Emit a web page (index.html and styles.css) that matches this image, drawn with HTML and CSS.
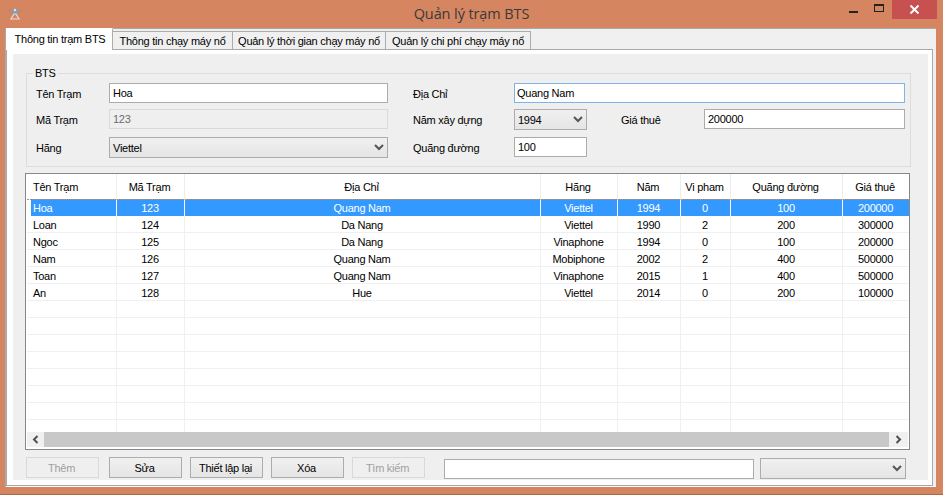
FILE: index.html
```html
<!DOCTYPE html>
<html lang="vi">
<head>
<meta charset="utf-8">
<title>Quản lý trạm BTS</title>
<link rel="stylesheet" href="styles.css">
</head>
<body>
<div class="window">
  <header class="titlebar">
    <svg class="app-icon" width="16" height="16" viewBox="0 0 16 16"><path d="M3 4q-1 3 1 5M13 4q1 3-1 5" stroke="#a98a7c" fill="none"/><circle cx="8" cy="6.5" r="3" fill="#7f9cbc"/><circle cx="8" cy="5" r="1.2" fill="#e8e4e0"/><path d="M7 9 4 14h8L9 9z" fill="none" stroke="#eadbd2" stroke-width="1.2"/></svg>
    <h1 class="title">Quản lý trạm BTS</h1>
    <div class="controls">
      <span class="ctl"><span class="min"></span></span>
      <span class="ctl"><span class="max"></span></span>
      <span class="close"><svg width="11" height="9" viewBox="0 0 11 9"><path d="M1.5 .5l8 8M9.5 .5l-8 8" stroke="#fff" stroke-width="2" fill="none"/></svg></span>
    </div>
  </header>
  <div class="client">
    <nav class="tabs">
      <span class="tab active">Thông tin trạm BTS</span>
      <span class="tab t2">Thông tin chạy máy nổ</span>
      <span class="tab t3">Quản lý thời gian chạy máy nổ</span>
      <span class="tab t4">Quản lý chi phí chạy máy nổ</span>
    </nav>
    <div class="panel">
      <div class="inner">
        <section class="group">
          <span class="legend">BTS</span>
          <div class="form">
            <label class="lbl">Tên Trạm</label>
            <div class="field wide">Hoa</div>
            <label class="lbl l2">Địa Chỉ</label>
            <div class="field focus span3">Quang Nam</div>

            <label class="lbl">Mã Trạm</label>
            <div class="field wide disabled">123</div>
            <label class="lbl l2">Năm xây dựng</label>
            <div class="combo tall">1994<svg class="chev" width="10" height="7" viewBox="0 0 10 7"><path d="M1 1l4 4 4-4" stroke="#555" stroke-width="2" fill="none"/></svg></div>
            <label class="lbl l3">Giá thuê</label>
            <div class="field">200000</div>

            <label class="lbl">Hãng</label>
            <div class="combo tall">Viettel<svg class="chev" width="10" height="7" viewBox="0 0 10 7"><path d="M1 1l4 4 4-4" stroke="#555" stroke-width="2" fill="none"/></svg></div>
            <label class="lbl l2">Quãng đường</label>
            <div class="field">100</div>
          </div>
        </section>

        <section class="list">
          <div class="viewport">
            <table class="grid">
              <colgroup><col class="c1"><col class="c2"><col class="c3"><col class="c4"><col class="c5"><col class="c6"><col class="c7"><col class="c8"></colgroup>
              <thead><tr><th class="left">Tên Trạm</th><th>Mã Trạm</th><th>Địa Chỉ</th><th>Hãng</th><th>Năm</th><th>Vi pham</th><th>Quãng đường</th><th>Giá thuê</th></tr></thead>
              <tbody>
                <tr class="sel"><td class="left">Hoa</td><td>123</td><td>Quang Nam</td><td>Viettel</td><td>1994</td><td>0</td><td>100</td><td>200000</td></tr>
                <tr><td class="left">Loan</td><td>124</td><td>Da Nang</td><td>Viettel</td><td>1990</td><td>2</td><td>200</td><td>300000</td></tr>
                <tr><td class="left">Ngoc</td><td>125</td><td>Da Nang</td><td>Vinaphone</td><td>1994</td><td>0</td><td>100</td><td>200000</td></tr>
                <tr><td class="left">Nam</td><td>126</td><td>Quang Nam</td><td>Mobiphone</td><td>2002</td><td>2</td><td>400</td><td>500000</td></tr>
                <tr><td class="left">Toan</td><td>127</td><td>Quang Nam</td><td>Vinaphone</td><td>2015</td><td>1</td><td>400</td><td>500000</td></tr>
                <tr><td class="left">An</td><td>128</td><td>Hue</td><td>Viettel</td><td>2014</td><td>0</td><td>200</td><td>100000</td></tr>
                <tr><td></td><td></td><td></td><td></td><td></td><td></td><td></td><td></td></tr>
                <tr><td></td><td></td><td></td><td></td><td></td><td></td><td></td><td></td></tr>
                <tr><td></td><td></td><td></td><td></td><td></td><td></td><td></td><td></td></tr>
                <tr><td></td><td></td><td></td><td></td><td></td><td></td><td></td><td></td></tr>
                <tr><td></td><td></td><td></td><td></td><td></td><td></td><td></td><td></td></tr>
                <tr><td></td><td></td><td></td><td></td><td></td><td></td><td></td><td></td></tr>
                <tr><td></td><td></td><td></td><td></td><td></td><td></td><td></td><td></td></tr>
                <tr><td></td><td></td><td></td><td></td><td></td><td></td><td></td><td></td></tr>
              </tbody>
            </table>
          </div>
          <div class="hscroll">
            <span class="arrow"><svg width="7" height="9" viewBox="0 0 7 9"><path d="M5.5 1 2 4.5 5.5 8" stroke="#505050" stroke-width="2" fill="none"/></svg></span>
            <span class="track"></span>
            <span class="arrow"><svg width="7" height="9" viewBox="0 0 7 9"><path d="M1.5 1 5 4.5 1.5 8" stroke="#505050" stroke-width="2" fill="none"/></svg></span>
          </div>
        </section>

        <footer class="actions">
          <button class="btn" disabled>Thêm</button>
          <button class="btn b2">Sửa</button>
          <button class="btn">Thiết lập lại</button>
          <button class="btn">Xóa</button>
          <button class="btn" disabled>Tìm kiếm</button>
          <div class="field search"></div>
          <div class="combo filter"><svg class="chev" width="10" height="7" viewBox="0 0 10 7"><path d="M1 1l4 4 4-4" stroke="#555" stroke-width="2" fill="none"/></svg></div>
        </footer>
      </div>
    </div>
  </div>
</div>
</body>
</html>
```
FILE: styles.css
```css
* { box-sizing: border-box; }
html, body { margin: 0; height: 100%; }
body {
  font-family: "Liberation Sans", Arial, sans-serif;
  font-size: 11px;
  letter-spacing: -0.25px;
  color: #000;
  overflow: hidden;
}
.window {
  width: 943px;
  height: 495px;
  background: #d58661;
  border-bottom: 1px solid #a8694b;
  position: relative;
}
.titlebar {
  height: 28px;
  display: flex;
  align-items: flex-start;
  justify-content: center;
  position: relative;
}
.app-icon { position: absolute; left: 7px; top: 5px; }
.title {
  margin: 4px 0 0;
  font: 400 14.5px/20px "Open Sans", "Noto Sans", sans-serif;
  color: #3a3a3a;
  letter-spacing: -0.1px;
}
.controls {
  position: absolute;
  right: 6px;
  top: 0;
  display: flex;
}
.ctl { width: 26px; height: 19px; display: flex; align-items: center; justify-content: center; }
.min { width: 9px; height: 2px; margin-top: 5px; background: #222; }
.max { width: 10px; height: 8px; margin-top: -4px; border: 1px solid #222; border-top-width: 2px; }
.close {
  width: 45px;
  height: 19px;
  background: #c75050;
  display: flex;
  align-items: center;
  justify-content: center;
}
.client {
  margin: 0 7px 0 5px;
  height: 459px;
  background: #f0f0f0;
  border: solid #a9a9a9;
  border-width: 1px 0 0 1px;
  box-shadow: inset 0 -1px 0 #fff;
}
.tabs {
  height: 20px;
  display: flex;
  align-items: flex-end;
  position: relative;
  z-index: 1;
}
.tab {
  height: 18px;
  line-height: 18px;
  padding: 0;
  text-align: center;
  background: #f0f0f0;
  border: 1px solid #acacac;
  border-bottom: 0;
  border-left: 0;
  white-space: nowrap;
}
.tab.active {
  width: 107px;
  height: 22px;
  margin-bottom: -1px;
  padding-left: 2px;
  line-height: 20px;
  background: #fff;
  border: 1px solid #acacac;
  border-bottom: 0;
  border-left: 0;
  border-top-color: #fff;
}
.t2 { width: 120px; }
.t3 { width: 153px; }
.t4 { width: 145px; }
.panel {
  width: 927px;
  height: 437px;
  border: 1px solid #a9a9a9;
  background: #fff;
  padding: 4px 4px 4px 6px;
}
.inner {
  height: 426px;
  background: #efefef;
  padding: 19px 0 0 12px;
}
.group {
  position: relative;
  width: 885px;
  height: 94px;
  margin-left: 1px;
  border: 1px solid #dcdcdc;
  padding: 9px 0 0 9px;
}
.legend {
  position: absolute;
  left: 6px;
  top: -7px;
  padding: 0 2px;
  line-height: 13px;
  background: #efefef;
}
.form {
  display: grid;
  grid-template-columns: 73px 279px 126px 73px 117px 201px;
  grid-template-rows: 26px 28px 21px;
  align-items: start;
}
.lbl { line-height: 22px; }
.l2 { padding-left: 25px; }
.l3 { padding-left: 34px; }
.field {
  height: 20px;
  line-height: 18px;
  padding: 0 2px 0 3px;
  background: #fff;
  border: 1px solid #acacac;
}
.disabled { background: #efefef; border-color: #d9d9d9; color: #6d6d6d; }
.focus { border-color: #7eb4ea; padding-left: 2px; }
.span3 { grid-column: 4 / 7; }
.combo {
  height: 21px;
  line-height: 20px;
  padding-left: 3px;
  border: 1px solid #acacac;
  background: linear-gradient(#f0f0f0, #e5e5e5);
  position: relative;
}
.chev { position: absolute; right: 3px; top: 6px; }
.list {
  width: 885px;
  height: 277px;
  margin-top: 6px;
  border: 1px solid #828790;
  background: #fff;
  padding-left: 1px;
}
.viewport { height: 258px; overflow: hidden; }
.grid {
  border-collapse: separate;
  border-spacing: 0;
  table-layout: fixed;
  width: 882px;
}
.c1 { width: 90px; }
.c2 { width: 68px; }
.c3 { width: 356px; }
.c4 { width: 77px; }
.c5 { width: 63px; }
.c6 { width: 50px; }
.c7 { width: 112px; }
.c8 { width: 66px; }
th {
  height: 25px;
  padding: 0 2px 0 0;
  font-weight: 400;
  text-align: center;
  border-right: 1px solid #e9eef5;
  white-space: nowrap;
}
td {
  height: 17px;
  padding: 2px 1px 0 0;
  text-align: center;
  border-right: 1px solid #f0f0f0;
  border-bottom: 1px solid #f0f0f0;
  line-height: 14px;
  white-space: nowrap;
}
th:last-child, td:last-child { border-right: 0; }
th.left, td.left { text-align: left; padding-left: 6px; }
.sel td {
  padding-top: 0;
  line-height: 15px;
  background: #3399ff;
  color: #fff;
  border-right-color: #fff;
  border-top: 1px dotted #d98a3d;
  border-bottom: 0;
}
.sel td.left { background: linear-gradient(90deg, #fff 4px, #3399ff 4px); }
.hscroll {
  height: 15px;
  display: flex;
  background: #f0f0f0;
  margin-right: 1px;
}
.arrow { width: 17px; display: flex; align-items: center; justify-content: center; }
.arrow:last-child { width: 19px; }
.track { flex: 1; background: #c8c8c8; }
.actions {
  display: flex;
  align-items: flex-start;
  margin-top: 7px;
  padding-left: 1px;
}
.btn {
  width: 73px;
  height: 21px;
  margin-right: 8px;
  padding: 0 2px 0 0;
  font: inherit;
  letter-spacing: inherit;
  color: #000;
  border: 1px solid #acacac;
  background: linear-gradient(#f0f0f0, #e5e5e5);
}
.b2 { margin-left: 2px; }
.btn:disabled { color: #a0a0a0; border-color: #d9d9d9; background: #efefef; }
.search { width: 310px; margin: 2px 0 0 11px; }
.filter { width: 146px; margin: 1px 0 0 6px; }
```
